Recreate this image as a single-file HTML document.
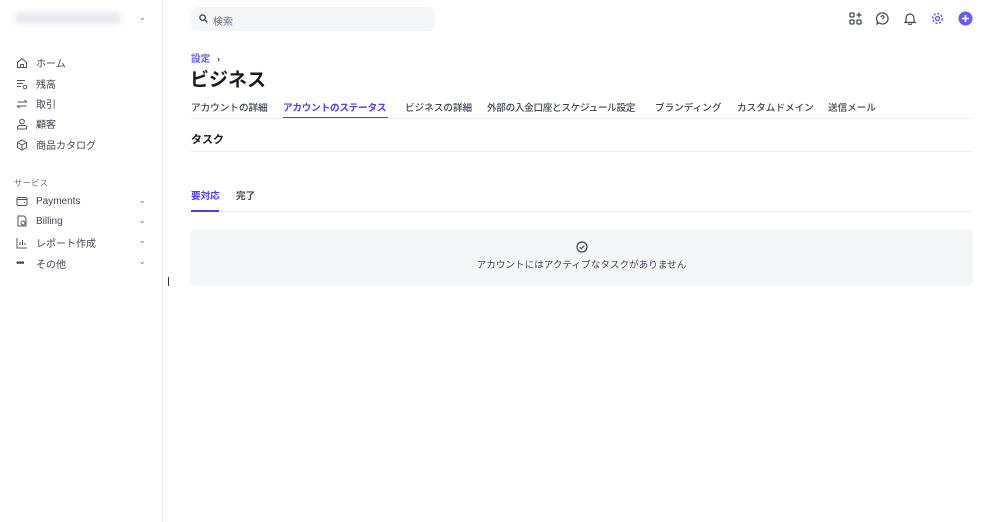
<!DOCTYPE html>
<html><head><meta charset="utf-8"><style>
*{margin:0;padding:0;box-sizing:border-box}
body{width:1000px;height:522px;background:#fff;font-family:"Liberation Sans","Noto Sans CJK JP",sans-serif;color:#353a44;position:relative;overflow:hidden}
.sb{position:absolute;left:0;top:0;width:163px;height:522px;border-right:1px solid #ebeef1}
.abs{position:absolute}
.nav{position:absolute;left:16px;font-size:10px;color:#414552;display:flex;align-items:center}
.nav svg{width:12px;height:12px;margin-right:8px}
.chev{position:absolute;left:139px;font-size:8px;color:#6c7688}
.t{font-size:9.6px;position:absolute;top:100px;color:#414552;font-weight:500;white-space:nowrap}
</style></head><body>
<div class="sb">
<div class="abs" style="left:14px;top:12px;width:108px;height:12px;border-radius:6px;background:#e9eaee;filter:blur(3px)"></div>
<div class="chev" style="top:13px">⌄</div>
<div class="nav" style="top:55px"><svg viewBox="0 0 12 12" fill="none" stroke="#555" stroke-width="1"><path d="M1.5 5.5L6 1.5l4.5 4v5h-9z M4.5 10.5V7.5h3v3"/></svg>ホーム</div>
<div class="nav" style="top:76px"><svg viewBox="0 0 12 12" fill="none" stroke="#555" stroke-width="1"><path d="M1 2.5h8M1 5.5h6M1 8.5h4"/><circle cx="9" cy="9" r="1.8"/></svg>残高</div>
<div class="nav" style="top:96px"><svg viewBox="0 0 12 12" fill="none" stroke="#555" stroke-width="1"><path d="M1.5 4h9l-2-2M10.5 8h-9l2 2"/></svg>取引</div>
<div class="nav" style="top:116px"><svg viewBox="0 0 12 12" fill="none" stroke="#555" stroke-width="1"><circle cx="6" cy="3.5" r="2.3"/><path d="M1.5 11v-1.5a2 2 0 012-2h5a2 2 0 012 2V11z"/></svg>顧客</div>
<div class="nav" style="top:137px"><svg viewBox="0 0 12 12" fill="none" stroke="#555" stroke-width="1"><path d="M6 1l4.5 2.5v5L6 11 1.5 8.5v-5z M1.5 3.5L6 6l4.5-2.5M6 6v5"/></svg>商品カタログ</div>
<div class="abs" style="left:14px;top:177px;font-size:8.5px;color:#6c7688">サービス</div>
<div class="nav" style="top:195px"><svg viewBox="0 0 12 12" fill="none" stroke="#555" stroke-width="1"><rect x="1" y="2.5" width="10" height="8" rx="1.5"/><path d="M1 4.5h10M8 7.5h1"/></svg>Payments</div><div class="chev" style="top:196px">⌄</div>
<div class="nav" style="top:215px"><svg viewBox="0 0 12 12" fill="none" stroke="#555" stroke-width="1"><path d="M2 1h6l2 2v8H2z"/><circle cx="7" cy="8" r="2"/></svg>Billing</div><div class="chev" style="top:216px">⌄</div>
<div class="nav" style="top:235px"><svg viewBox="0 0 12 12" fill="none" stroke="#555" stroke-width="1"><path d="M1 1v10h10M4 8V5M6.5 8V3M9 8V6"/></svg>レポート作成</div><div class="chev" style="top:236px">⌄</div>
<div class="nav" style="top:256px"><span style="width:12px;margin-right:8px;font-size:10px;letter-spacing:-1px">•••</span>その他</div><div class="chev" style="top:257px">⌄</div>
</div>
<div class="abs" style="left:168px;top:277px;width:1px;height:9px;background:#333"></div>
<div class="abs" style="left:191px;top:7px;width:244px;height:24px;background:#f5f6f8;border-radius:6px;font-size:10px;color:#687385;padding:6px 0 0 22px">検索
<svg class="abs" style="left:8px;top:7px" width="9" height="9" viewBox="0 0 10 10" fill="none" stroke="#414552" stroke-width="1.5"><circle cx="4" cy="4" r="3"/><path d="M6.3 6.3L9 9"/></svg></div>
<svg class="abs" style="left:849px;top:12px" width="13" height="13" viewBox="0 0 13 13" fill="none" stroke="#414552" stroke-width="1.3"><rect x="1" y="1" width="4" height="4" rx="1"/><rect x="1" y="8" width="4" height="4" rx="1"/><rect x="8" y="8" width="4" height="4" rx="1"/><path d="M10 0.5v5M7.5 3h5"/></svg>
<svg class="abs" style="left:876px;top:12px" width="13" height="13" viewBox="0 0 13 13" fill="none" stroke="#414552" stroke-width="1.2"><path d="M6.5 1a5.5 5.5 0 11-3.5 9.7L1 12l.6-2.3A5.5 5.5 0 016.5 1z"/><path d="M5 5a1.5 1.5 0 113 .3c-.3.8-1.5 1-1.5 2M6.5 9v.3"/></svg>
<svg class="abs" style="left:904px;top:12px" width="12" height="13" viewBox="0 0 12 13" fill="none" stroke="#414552" stroke-width="1.2"><path d="M2 9.5V6a4 4 0 018 0v3.5l1 1H1z M4.5 11.5a1.5 1.5 0 003 0"/></svg>
<svg class="abs" style="left:931px;top:12px" width="13" height="13" viewBox="0 0 13 13" fill="none" stroke="#635bff" stroke-width="1.4"><circle cx="6.5" cy="6.5" r="2"/><circle cx="6.5" cy="6.5" r="4.8" stroke-dasharray="2.2 1.5"/></svg>
<svg class="abs" style="left:958px;top:11px" width="15" height="15" viewBox="0 0 15 15"><circle cx="7.5" cy="7.5" r="7" fill="#635bff"/><path d="M7.5 4v7M4 7.5h7" stroke="#fff" stroke-width="1.6"/></svg>
<div class="abs" style="left:191px;top:51px;font-size:9.6px;color:#635bff;font-weight:600">設定 <span style="color:#414552;margin-left:4px">›</span></div>
<div class="abs" style="left:190px;top:65px;font-size:19px;font-weight:700;color:#1a1b25">ビジネス</div>
<div class="t" style="left:191px">アカウントの詳細</div>
<div class="t" style="left:283px;color:#533afd;font-weight:700;letter-spacing:-0.2px">アカウントのステータス</div>
<div class="abs" style="left:283px;top:117px;width:105px;height:2px;background:#533afd"></div>
<div class="t" style="left:405px">ビジネスの詳細</div>
<div class="t" style="left:487px;letter-spacing:-0.3px">外部の入金口座とスケジュール設定</div>
<div class="t" style="left:655px">ブランディング</div>
<div class="t" style="left:737px">カスタムドメイン</div>
<div class="t" style="left:828px">送信メール</div>
<div class="abs" style="left:191px;top:118px;width:782px;height:1px;background:#ebeef1"></div>
<div class="abs" style="left:191px;top:131px;font-size:11px;font-weight:700;color:#1a1b25">タスク</div>
<div class="abs" style="left:191px;top:151px;width:782px;height:1px;background:#ebeef1"></div>
<div class="abs" style="left:191px;top:188px;font-size:9.6px;color:#533afd;font-weight:700">要対応</div>
<div class="abs" style="left:236px;top:188px;font-size:9.6px;color:#414552;font-weight:600">完了</div>
<div class="abs" style="left:191px;top:211px;width:782px;height:1px;background:#ebeef1"></div>
<div class="abs" style="left:191px;top:210px;width:28px;height:2px;background:#533afd"></div>
<div class="abs" style="left:190px;top:229px;width:783px;height:57px;background:#f5f6f8;border-radius:6px"></div>
<svg class="abs" style="left:576px;top:241px" width="12" height="12" viewBox="0 0 12 12" fill="none" stroke="#414552" stroke-width="1.2"><circle cx="6" cy="6" r="5"/><path d="M3.7 6.2l1.6 1.6 3-3.2"/></svg>
<div class="abs" style="left:190px;top:257px;width:783px;text-align:center;font-size:9.6px;color:#414552">アカウントにはアクティブなタスクがありません</div>
</body></html>
